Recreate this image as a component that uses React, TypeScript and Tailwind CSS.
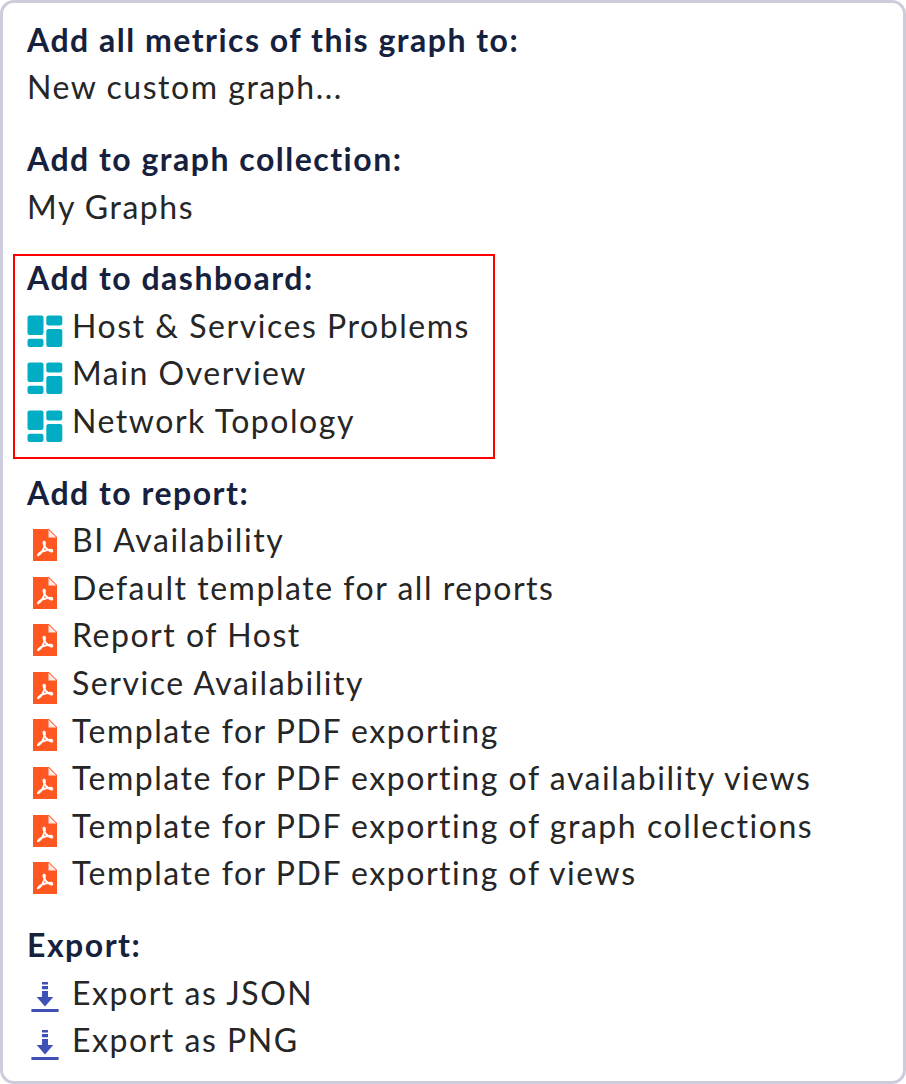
import React from "react";

function DashboardIcon() {
  return (
    <svg className="block h-[32px] w-[36px]" viewBox="0 0 36 32" fill="#00adc4">
      <rect x="0.5" y="0.4" width="16" height="19.6" rx="2.2" />
      <rect x="19.3" y="0.4" width="16" height="10" rx="2.2" />
      <rect x="0.5" y="23.7" width="16" height="8.2" rx="2.2" />
      <rect x="19.3" y="13.9" width="16" height="18" rx="2.2" />
    </svg>
  );
}

function PdfIcon() {
  return (
    <svg className="block h-[32px] w-[24px]" viewBox="0 0 24 32">
      <path d="M0 0H16L24 8V32H0Z" fill="#ff5722" />
      <path d="M15.5 0.8V8.5H23.3Z" fill="#fbe9e7" />
      <path d="M11 12.6C9.4 12.8 11.6 18.2 14.6 20.6S20 23 19.2 21.4S9 21.6 6 24.6S7 26.4 9.6 21.6S12.6 12.4 11 12.6Z" fill="none" stroke="#fff" strokeWidth="1.9" />
    </svg>
  );
}

function DownloadIcon() {
  return (
    <svg className="mt-[0.7px] block h-[30px] w-[28px]" viewBox="0 0 28 30" fill="#3f51b5">
      <path d="M11 0h6v2.4h-6zM11 4h6v3.2h-6zM11 9h6v6h5.3l-8.3 9.6-8.3-9.6H11zM0.4 27h27.2v2.9H0.4z" />
    </svg>
  );
}

type Kind = "dashboard" | "pdf" | "download";

function Heading({ children }: { children: React.ReactNode }) {
  return <div className="h-[47.6px] font-bold tracking-[1.5px] text-[#16213d]">{children}</div>;
}

function Row({ icon, children }: { icon?: Kind; children: React.ReactNode }) {
  return (
    <div className="flex h-[47.6px]">
      {icon && (
        <span className="flex w-[45px] shrink-0 pt-[12.9px]">
          <span className="flex w-[36px] justify-center">
            {icon === "dashboard" ? <DashboardIcon /> : icon === "pdf" ? <PdfIcon /> : <DownloadIcon />}
          </span>
        </span>
      )}
      <span>{children}</span>
    </div>
  );
}

export default function App() {
  return (
    <div className="h-[1084px] w-[906px] bg-white">
      <div className="h-full rounded-[14px] border-[3px] border-[#ccccdc] pt-[12.8px] pl-[24px] font-['Lato',sans-serif] text-[32px] leading-[47.6px] tracking-[1.535px] whitespace-nowrap text-[#262626]">
        <section className="mb-[24px]">
          <Heading>Add all metrics of this graph to:</Heading>
          <Row>New custom graph...</Row>
        </section>
        <section className="mb-[24px]">
          <Heading>Add to graph collection:</Heading>
          <Row>My Graphs</Row>
        </section>
        <section className="relative mb-[24px]">
          <div className="pointer-events-none absolute -top-[0.2px] -left-[14px] h-[205px] w-[482px] border-2 border-[#ff0000]" />
          <Heading>Add to dashboard:</Heading>
          <Row icon="dashboard">Host &amp; Services Problems</Row>
          <Row icon="dashboard">Main Overview</Row>
          <Row icon="dashboard">Network Topology</Row>
        </section>
        <section className="mb-[24.2px]">
          <Heading>Add to report:</Heading>
          <Row icon="pdf">BI Availability</Row>
          <Row icon="pdf">Default template for all reports</Row>
          <Row icon="pdf">Report of Host</Row>
          <Row icon="pdf">Service Availability</Row>
          <Row icon="pdf">Template for PDF exporting</Row>
          <Row icon="pdf">Template for PDF exporting of availability views</Row>
          <Row icon="pdf">Template for PDF exporting of graph collections</Row>
          <Row icon="pdf">Template for PDF exporting of views</Row>
        </section>
        <section>
          <Heading>Export:</Heading>
          <Row icon="download">Export as JSON</Row>
          <Row icon="download">Export as PNG</Row>
        </section>
      </div>
    </div>
  );
}
